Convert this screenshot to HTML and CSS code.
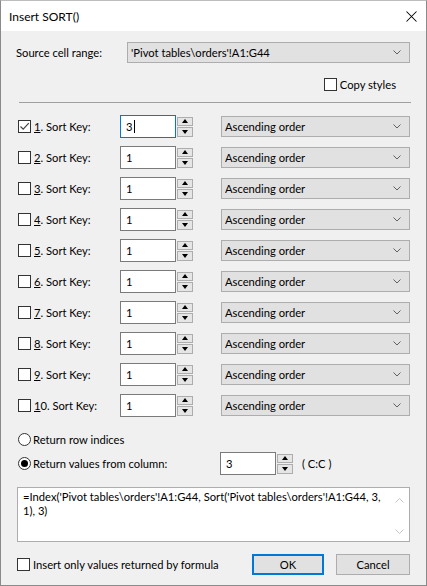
FILE: index.html
```html
<!DOCTYPE html>
<html>
<head>
<meta charset="utf-8">
<title>Insert SORT()</title>
<link rel="stylesheet" href="styles.css">
</head>
<body>
<div class="window">
  <div class="titlebar">
    <span class="title">Insert SORT()</span>
    <svg class="close" width="11" height="11" viewBox="0 0 11 11"><path d="M0.5 0.5L10.5 10.5M10.5 0.5L0.5 10.5" stroke="#000" stroke-width="1.05" fill="none"/></svg>
  </div>
  <div class="content">
    <div class="source-row">
      <span class="source-label">Source cell range:</span>
      <div class="combo source-combo"><span class="combo-text">'Pivot tables\orders'!A1:G44</span><svg class="chev" width="8" height="5" viewBox="0 0 8 5"><path d="M0.5 0.5L4 4L7.5 0.5" stroke="#606060" fill="none"/></svg></div>
    </div>
    <div class="copy-row"><span class="check"></span><span>Copy styles</span></div>
    <div class="separator"></div>

    <div class="sort-list">
      <div class="sort-row">
        <div class="key"><span class="check checked"><svg width="11" height="11" viewBox="0 0 11 11"><path d="M1.5 5.5L4.2 8.2L9.8 2.2" stroke="#444" stroke-width="1.2" fill="none"/></svg></span><span><u>1</u>. Sort Key:</span></div>
        <div class="spin-field"><div class="num-input focused"><span>3</span><span class="caret"></span></div><div class="spinner"><span class="spin-btn"><span class="tri-up"></span></span><span class="spin-btn"><span class="tri-down"></span></span></div></div>
        <div class="combo order-combo"><span class="combo-text">Ascending order</span><svg class="chev" width="8" height="5" viewBox="0 0 8 5"><path d="M0.5 0.5L4 4L7.5 0.5" stroke="#606060" fill="none"/></svg></div>
      </div>
      <div class="sort-row">
        <div class="key"><span class="check"></span><span><u>2</u>. Sort Key:</span></div>
        <div class="spin-field"><div class="num-input"><span>1</span></div><div class="spinner"><span class="spin-btn"><span class="tri-up"></span></span><span class="spin-btn"><span class="tri-down"></span></span></div></div>
        <div class="combo order-combo"><span class="combo-text">Ascending order</span><svg class="chev" width="8" height="5" viewBox="0 0 8 5"><path d="M0.5 0.5L4 4L7.5 0.5" stroke="#606060" fill="none"/></svg></div>
      </div>
      <div class="sort-row">
        <div class="key"><span class="check"></span><span><u>3</u>. Sort Key:</span></div>
        <div class="spin-field"><div class="num-input"><span>1</span></div><div class="spinner"><span class="spin-btn"><span class="tri-up"></span></span><span class="spin-btn"><span class="tri-down"></span></span></div></div>
        <div class="combo order-combo"><span class="combo-text">Ascending order</span><svg class="chev" width="8" height="5" viewBox="0 0 8 5"><path d="M0.5 0.5L4 4L7.5 0.5" stroke="#606060" fill="none"/></svg></div>
      </div>
      <div class="sort-row">
        <div class="key"><span class="check"></span><span><u>4</u>. Sort Key:</span></div>
        <div class="spin-field"><div class="num-input"><span>1</span></div><div class="spinner"><span class="spin-btn"><span class="tri-up"></span></span><span class="spin-btn"><span class="tri-down"></span></span></div></div>
        <div class="combo order-combo"><span class="combo-text">Ascending order</span><svg class="chev" width="8" height="5" viewBox="0 0 8 5"><path d="M0.5 0.5L4 4L7.5 0.5" stroke="#606060" fill="none"/></svg></div>
      </div>
      <div class="sort-row">
        <div class="key"><span class="check"></span><span><u>5</u>. Sort Key:</span></div>
        <div class="spin-field"><div class="num-input"><span>1</span></div><div class="spinner"><span class="spin-btn"><span class="tri-up"></span></span><span class="spin-btn"><span class="tri-down"></span></span></div></div>
        <div class="combo order-combo"><span class="combo-text">Ascending order</span><svg class="chev" width="8" height="5" viewBox="0 0 8 5"><path d="M0.5 0.5L4 4L7.5 0.5" stroke="#606060" fill="none"/></svg></div>
      </div>
      <div class="sort-row">
        <div class="key"><span class="check"></span><span><u>6</u>. Sort Key:</span></div>
        <div class="spin-field"><div class="num-input"><span>1</span></div><div class="spinner"><span class="spin-btn"><span class="tri-up"></span></span><span class="spin-btn"><span class="tri-down"></span></span></div></div>
        <div class="combo order-combo"><span class="combo-text">Ascending order</span><svg class="chev" width="8" height="5" viewBox="0 0 8 5"><path d="M0.5 0.5L4 4L7.5 0.5" stroke="#606060" fill="none"/></svg></div>
      </div>
      <div class="sort-row">
        <div class="key"><span class="check"></span><span><u>7</u>. Sort Key:</span></div>
        <div class="spin-field"><div class="num-input"><span>1</span></div><div class="spinner"><span class="spin-btn"><span class="tri-up"></span></span><span class="spin-btn"><span class="tri-down"></span></span></div></div>
        <div class="combo order-combo"><span class="combo-text">Ascending order</span><svg class="chev" width="8" height="5" viewBox="0 0 8 5"><path d="M0.5 0.5L4 4L7.5 0.5" stroke="#606060" fill="none"/></svg></div>
      </div>
      <div class="sort-row">
        <div class="key"><span class="check"></span><span><u>8</u>. Sort Key:</span></div>
        <div class="spin-field"><div class="num-input"><span>1</span></div><div class="spinner"><span class="spin-btn"><span class="tri-up"></span></span><span class="spin-btn"><span class="tri-down"></span></span></div></div>
        <div class="combo order-combo"><span class="combo-text">Ascending order</span><svg class="chev" width="8" height="5" viewBox="0 0 8 5"><path d="M0.5 0.5L4 4L7.5 0.5" stroke="#606060" fill="none"/></svg></div>
      </div>
      <div class="sort-row">
        <div class="key"><span class="check"></span><span><u>9</u>. Sort Key:</span></div>
        <div class="spin-field"><div class="num-input"><span>1</span></div><div class="spinner"><span class="spin-btn"><span class="tri-up"></span></span><span class="spin-btn"><span class="tri-down"></span></span></div></div>
        <div class="combo order-combo"><span class="combo-text">Ascending order</span><svg class="chev" width="8" height="5" viewBox="0 0 8 5"><path d="M0.5 0.5L4 4L7.5 0.5" stroke="#606060" fill="none"/></svg></div>
      </div>
      <div class="sort-row">
        <div class="key"><span class="check"></span><span><u>1</u>0. Sort Key:</span></div>
        <div class="spin-field"><div class="num-input"><span>1</span></div><div class="spinner"><span class="spin-btn"><span class="tri-up"></span></span><span class="spin-btn"><span class="tri-down"></span></span></div></div>
        <div class="combo order-combo"><span class="combo-text">Ascending order</span><svg class="chev" width="8" height="5" viewBox="0 0 8 5"><path d="M0.5 0.5L4 4L7.5 0.5" stroke="#606060" fill="none"/></svg></div>
      </div>
    </div>

    <div class="radio-row first"><span class="radio"></span><span>Return row indices</span></div>
    <div class="radio-row second">
      <div class="radio-key"><span class="radio on"><span class="dot"></span></span><span>Return values from column:</span></div>
      <div class="spin-field"><div class="num-input"><span>3</span></div><div class="spinner"><span class="spin-btn"><span class="tri-up"></span></span><span class="spin-btn"><span class="tri-down"></span></span></div></div>
      <span class="col-ref">( C:C )</span>
    </div>

    <div class="formula">
      <div class="formula-text"><div>=Index('Pivot tables\orders'!A1:G44, Sort('Pivot tables\orders'!A1:G44, 3,</div><div>1), 3)</div></div>
      <div class="vscroll">
        <svg width="9" height="5" viewBox="0 0 9 5"><path d="M0.5 4.5L4.5 0.5L8.5 4.5" stroke="#c4c4c4" fill="none"/></svg>
        <svg width="9" height="5" viewBox="0 0 9 5"><path d="M0.5 0.5L4.5 4.5L8.5 0.5" stroke="#c4c4c4" fill="none"/></svg>
      </div>
    </div>

    <div class="bottom-row">
      <span class="check"></span><span class="bottom-label">Insert only values returned by formula</span>
      <div class="button default">OK</div>
      <div class="button">Cancel</div>
    </div>
  </div>
</div>
</body>
</html>
```
FILE: styles.css
```css
* { box-sizing: border-box; }
html, body { margin: 0; padding: 0; }
body {
  width: 427px;
  height: 586px;
  background: #fff;
  font-family: Lato, "Liberation Sans", sans-serif;
  font-size: 11.2px;
  color: #000;
}
.window {
  width: 427px;
  height: 586px;
  border: 1px solid #8a8a8a;
  border-top-color: #bdbdbd;
  background: #f0f0f0;
  display: flex;
  flex-direction: column;
}
.titlebar {
  height: 30px;
  flex: 0 0 30px;
  background: #fff;
  display: flex;
  align-items: center;
  padding-left: 8px;
  font-size: 12px;
}
.close { margin-left: auto; margin-right: 9px; }
.content {
  display: flex;
  flex-direction: column;
  padding: 0 16px 0 15px;
}
.source-row {
  margin-top: 11px;
  height: 21px;
  display: flex;
  align-items: center;
}
.source-label { width: 111px; flex: 0 0 111px; }
.combo {
  height: 21px;
  border: 1px solid #adadad;
  background: #e1e1e1;
  display: flex;
  align-items: center;
  padding: 0 8px 0 3px;
}
.combo-text { flex: 1; white-space: nowrap; overflow: hidden; }
.source-combo { flex: 1; }
.chev { flex: 0 0 auto; }
.copy-row {
  margin-top: 15px;
  height: 13px;
  display: flex;
  align-items: center;
  justify-content: flex-end;
  gap: 3px;
  padding-right: 14px;
}
.check {
  width: 13px;
  height: 13px;
  flex: 0 0 13px;
  border: 1px solid #333;
  background: #fff;
  display: flex;
  align-items: center;
  justify-content: center;
}
.separator {
  margin: 11px -1px 0 3px;
  height: 1px;
  background: #a0a0a0;
}
.sort-list {
  margin-top: 8px;
  display: flex;
  flex-direction: column;
}
.sort-row {
  height: 31px;
  display: flex;
  align-items: center;
}
.key {
  width: 104px;
  flex: 0 0 104px;
  display: flex;
  align-items: center;
  gap: 3px;
  padding-left: 2px;
}
.spin-field {
  display: flex;
  align-items: center;
  gap: 1px;
}
.num-input {
  width: 56px;
  height: 23px;
  border: 1px solid #7a7a7a;
  background: #fff;
  display: flex;
  align-items: center;
  padding-left: 5px;
}
.num-input.focused { border-color: #0078d7; }
.caret {
  width: 1px;
  height: 13px;
  background: #000;
  margin-left: 1px;
}
.spinner {
  width: 16px;
  height: 20px;
  display: flex;
  flex-direction: column;
  gap: 1px;
}
.spin-btn {
  flex: 1;
  border: 1px solid #adadad;
  background: #e5e5e5;
  display: flex;
  align-items: center;
  justify-content: center;
}
.tri-up {
  width: 0; height: 0;
  border-left: 3.5px solid transparent;
  border-right: 3.5px solid transparent;
  border-bottom: 4px solid #000;
}
.tri-down {
  width: 0; height: 0;
  border-left: 3.5px solid transparent;
  border-right: 3.5px solid transparent;
  border-top: 4px solid #000;
}
.order-combo {
  margin-left: auto;
  width: 189px;
}
.radio-row {
  display: flex;
  align-items: center;
}
.radio-row.first {
  margin-top: 10px;
  height: 16px;
  gap: 2px;
  padding-left: 2px;
}
.radio-row.second {
  margin-top: 5px;
  height: 23px;
}
.radio-key {
  width: 204px;
  flex: 0 0 204px;
  display: flex;
  align-items: center;
  gap: 2px;
  padding-left: 2px;
}
.radio {
  width: 13px;
  height: 13px;
  flex: 0 0 13px;
  border: 1px solid #333;
  border-radius: 50%;
  background: #fff;
  display: flex;
  align-items: center;
  justify-content: center;
}
.dot {
  width: 7px;
  height: 7px;
  border-radius: 50%;
  background: #000;
}
.col-ref { margin-left: 9px; }
.formula {
  margin-top: 12px;
  margin-left: 1px;
  height: 55px;
  border: 1px solid #adadad;
  background: #fff;
  display: flex;
}
.formula-text {
  flex: 1;
  padding: 2px 0 0 5px;
  line-height: 14px;
  white-space: nowrap;
}
.vscroll {
  width: 17px;
  display: flex;
  flex-direction: column;
  justify-content: space-between;
  align-items: center;
  padding: 10px 2px 7px 0;
}
.bottom-row {
  margin-top: 12px;
  height: 21px;
  display: flex;
  align-items: center;
  padding-left: 1px;
}
.bottom-label { margin-left: 3px; }
.button {
  width: 74px;
  height: 21px;
  border: 1px solid #adadad;
  background: #e1e1e1;
  display: flex;
  align-items: center;
  justify-content: center;
  margin-left: 12px;
}
.button.default {
  margin-left: auto;
  width: 72px;
  border: 2px solid #0078d7;
}
```
